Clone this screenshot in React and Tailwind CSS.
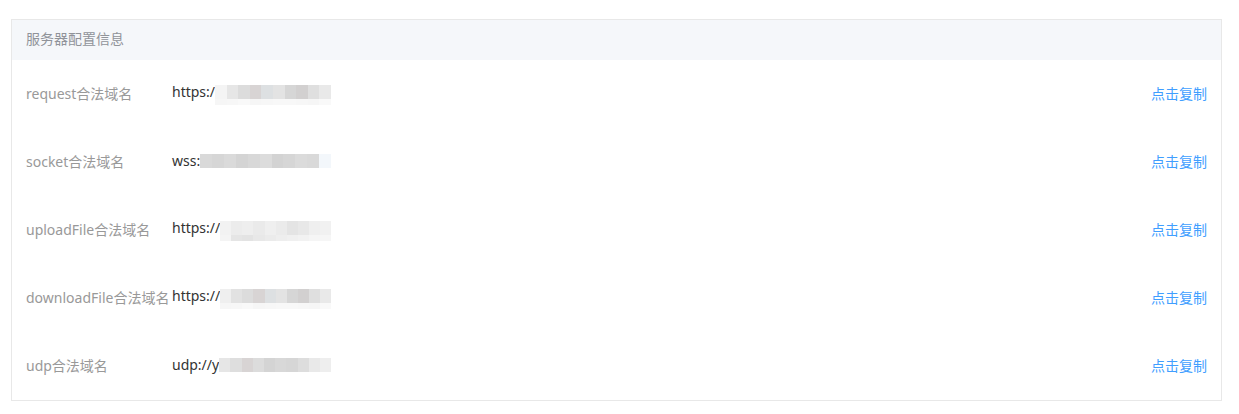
import React from 'react';

const rows = [
  {
    label: 'request合法域名',
    prefix: 'https:/',
    top: ['#f4f4f4', '#e6e6e6', '#dcdcdc', '#d8d4d4', '#dde0e2', '#e3e3e3', '#d6d6d6', '#d2d0d0', '#dfdfdf', '#e9e9e9'],
    bottom: ['#f6f6f6', '#f7f7f7', '#f9f9f9', '#f6f6f6', '#f7f7f7', '#f8f8f8', '#f8f8f8', '#f7f7f7', '#f6f6f6', '#f9f9f9'],
  },
  {
    label: 'socket合法域名',
    prefix: 'wss:',
    top: ['#d9d9d9', '#d6d6d6', '#dadada', '#d4d4d4', '#d8d8d8', '#dcdcdc', '#d3d3d3', '#d6d6d6', '#dbdbdb', '#d9d9d9', '#f3f7fb'],
    bottom: null,
  },
  {
    label: 'uploadFile合法域名',
    prefix: 'https://',
    top: ['#f2f2f2', '#ececec', '#eeeeee', '#eaeaea', '#efefef', '#ebebeb', '#e4e4e4', '#e8e8e8', '#efefef', '#f1f1f1'],
    bottom: ['#f4f4f4', '#e5e5e5', '#e3e3e3', '#e8e8e8', '#ebebeb', '#eeeeee', '#f0f0f0', '#f2f2f2', '#f5f5f5', '#f6f6f6'],
  },
  {
    label: 'downloadFile合法域名',
    prefix: 'https://',
    top: ['#efefef', '#e2e2e2', '#dcdcdc', '#d8d4d4', '#dde0e2', '#e3e3e3', '#d6d6d6', '#d2d0d0', '#dfdfdf', '#e9e9e9'],
    bottom: ['#f6f6f6', '#f7f7f7', '#f9f9f9', '#f6f6f6', '#f7f7f7', '#f8f8f8', '#f8f8f8', '#f7f7f7', '#f6f6f6', '#f9f9f9'],
  },
  {
    label: 'udp合法域名',
    prefix: 'udp://y',
    top: ['#e6e6e6', '#dedede', '#d8d4d4', '#dcdcdc', '#d4d4d4', '#d8d8d8', '#d6d6d6', '#dddddd', '#e9e9e9', '#eeeeee'],
    bottom: null,
  },
];

const Mosaic = ({ top, bottom }) => (
  <div className="flex flex-col flex-1">
    <div className="flex">
      {top.map((c, i) => (
        <div key={i} className="flex-1 h-[14px]" style={{ backgroundColor: c }} />
      ))}
    </div>
    {bottom && (
      <div className="flex">
        {bottom.map((c, i) => (
          <div key={i} className="flex-1 h-[6px]" style={{ backgroundColor: c }} />
        ))}
      </div>
    )}
  </div>
);

export default function App() {
  return (
    <div
      className="bg-white w-[1239px] h-[414px] pt-[19px] pl-[11px]"
      style={{ fontFamily: '"Noto Sans", "Noto Sans CJK SC", sans-serif' }}
    >
      <div className="w-[1211px] border border-[#e8e8e8]">
        <div className="h-[40px] bg-[#f5f7fa] flex items-center px-[14px] pb-[3px] text-[14px] text-[#909399]">
          服务器配置信息
        </div>
        {rows.map((row) => (
          <div key={row.label} className="h-[68px] flex items-center pl-[14px] pr-[14px] pb-[2px] text-[14px]">
            <div className="w-[146px] shrink-0 whitespace-nowrap text-[#999999]">{row.label}</div>
            <div className="flex items-start w-[159px]">
              <span className="text-[#333333] leading-[20px]">{row.prefix}</span>
              <div className="pt-[3px] flex flex-1">
                <Mosaic top={row.top} bottom={row.bottom} />
              </div>
            </div>
            <div className="flex-1" />
            <a className="text-[#409eff] cursor-pointer">点击复制</a>
          </div>
        ))}
      </div>
    </div>
  );
}
